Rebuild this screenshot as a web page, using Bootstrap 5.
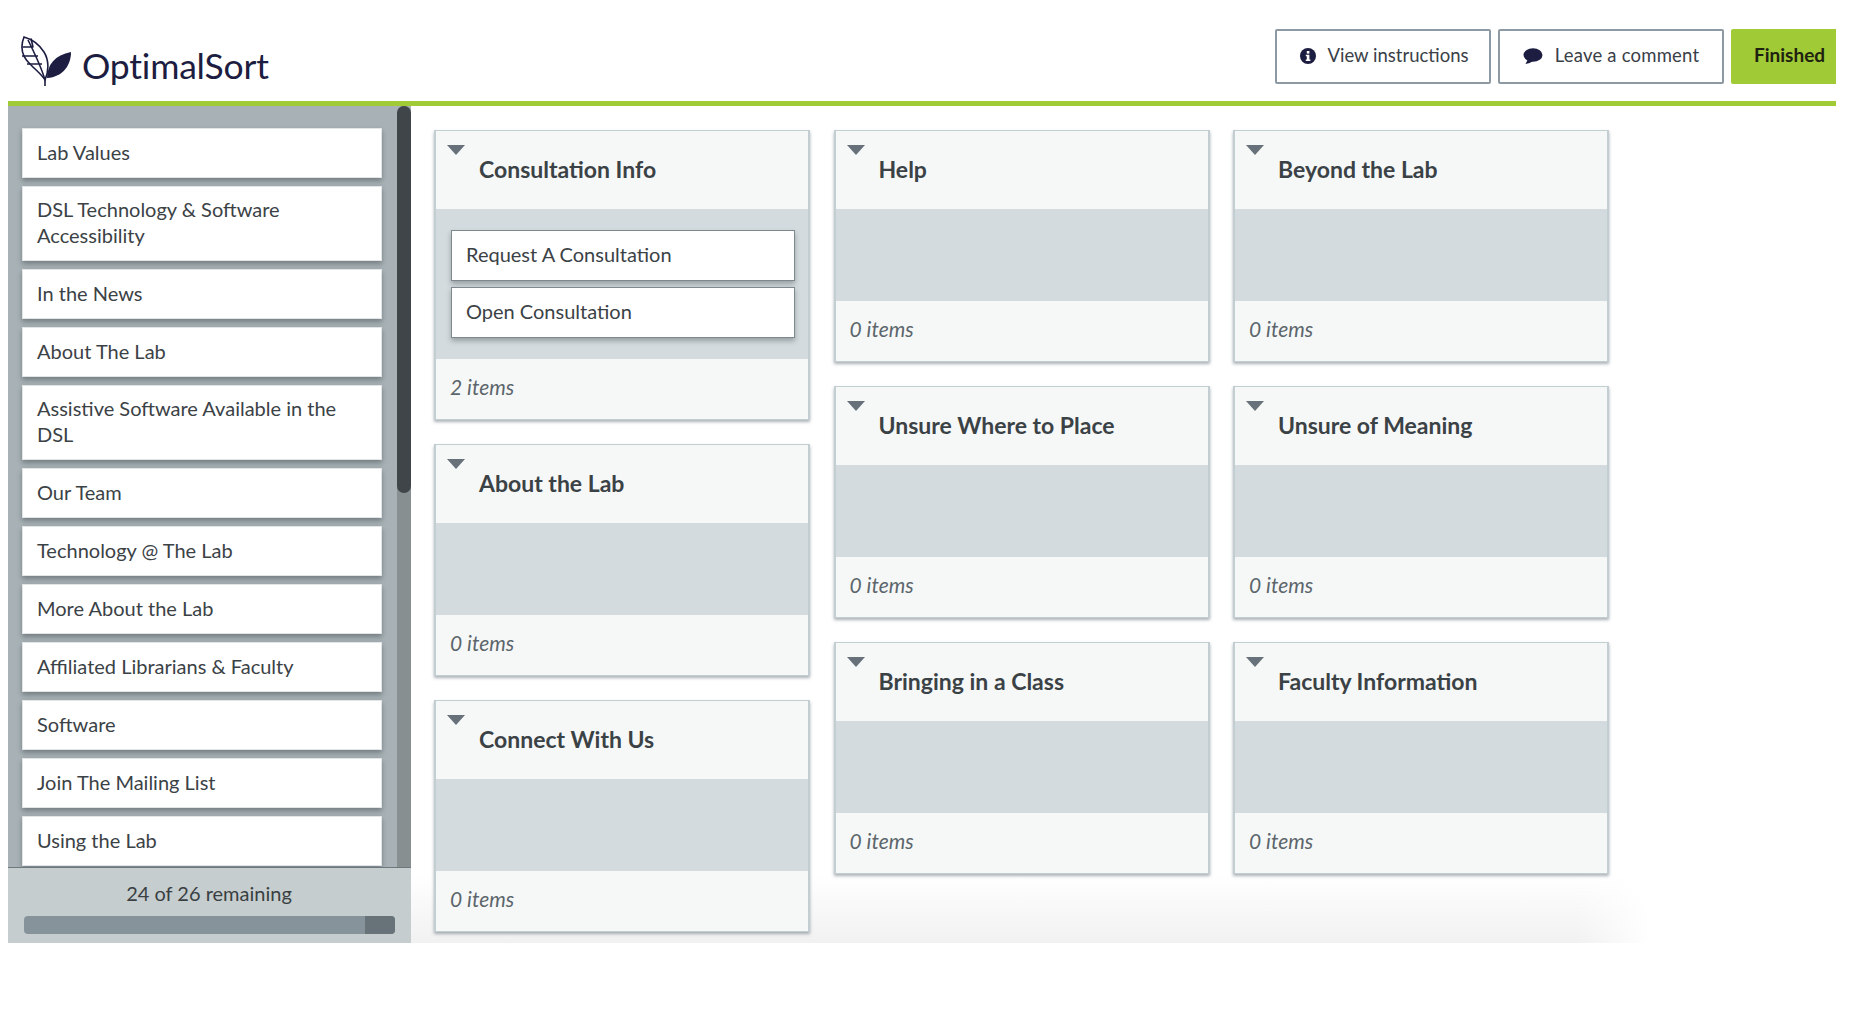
<!DOCTYPE html>
<html lang="en">
<head>
<meta charset="utf-8">
<title>OptimalSort</title>
<link href="https://cdn.jsdelivr.net/npm/bootstrap@5.3.0/dist/css/bootstrap.min.css" rel="stylesheet">
<style>
body{background:#fff;font-family:"Lato","Liberation Sans",sans-serif;color:#3b4246;margin:0}
.shell{width:1828px;margin-left:8px}
.top-bar{height:106px;border-bottom:5px solid #a0ca36;padding-top:29px}
.brand-box{width:270px;height:73px;padding-left:11px;margin-top:6px;margin-right:auto}
.brand-name{font-size:35.5px;color:#1c1d40;letter-spacing:-.2px;line-height:1;margin-left:9px;margin-top:13px}
.act-btn{height:55px;border:2px solid #8d9aa4;border-radius:2px;background:#fff;font-size:18.5px;color:#3a4048;padding:0 0 2px;margin-left:7px}
.act-view{width:216px}
.act-comment{width:226px;letter-spacing:.2px}
.act-done{width:105px;border-color:#a0ca36;background:#a0ca36;font-weight:700;font-size:19px;color:#1f2210;border-radius:2px 0 0 2px;padding-left:21px;text-align:left}
.act-view svg{margin-right:11px;margin-left:3px}
.act-comment svg{margin-right:12px}
.work{height:837px}
.side-panel{width:403px;height:837px;flex:none;background:#a8b2b6}
.side-scroll{height:761px;overflow:hidden}
.side-list{width:389px;padding:22px 0 0 14px;gap:8px}
.side-rail{width:14px;background:#878f91;border-radius:6px 6px 0 0;flex:none}
.side-thumb{height:387px;background:#3f4548;border-radius:7px}
.sort-item{background:#fff;width:360px;flex:none;padding:0 14px 3px;font-size:20px;line-height:26px;color:#3b4246;min-height:50px;box-shadow:0 3px 5px rgba(40,50,55,.4);display:flex;align-items:center;border:1px solid #e1e5e6}
.item-tall{min-height:75px}
.side-foot{height:76px;background:#c5cdcf;border-top:1px solid #6d787e;text-align:center;padding:0 17px 0 16px}
.foot-text{font-size:20px;line-height:24px;padding-top:13px;margin-bottom:11px;color:#3a3f42}
.meter{height:18px;background:#87939a;border-radius:4px;overflow:hidden;width:371px}
.meter-fill{background:#687279;height:100%}
.board{position:relative;padding:24px 0 0 23px;gap:23.500px;flex:1;overflow:hidden;height:837px}
.board::after{content:"";position:absolute;left:0;bottom:0;width:1240px;height:68px;background:linear-gradient(to bottom,rgba(242,242,242,0),#f1f1f1);-webkit-mask-image:linear-gradient(to right,#000 94%,transparent);mask-image:linear-gradient(to right,#000 94%,transparent)}
.board-col{width:376px;gap:24px;position:relative;z-index:1}
.cat-card{background:#f6f8f7;border:2px solid #c3ced2;border-top-width:1px;border-bottom-width:1px;box-shadow:0 2px 3px rgba(70,85,95,.45);width:376px}
.cat-head{height:78px;background:#f6f8f7}
.cat-caret{width:0;height:0;border-left:9px solid transparent;border-right:9px solid transparent;border-top:10px solid #66717a;margin:14px 0 0 11px}
.cat-title{font-size:23px;font-weight:700;color:#3b4246;line-height:28px;margin:24px 0 0 14px}
.cat-body{background:#d3dbde;min-height:92px;padding:21px 14px 21px 15px;gap:6px}
.cat-body .sort-item{width:344px;min-height:51px;border:1px solid #7d898f;box-shadow:0 3px 5px rgba(40,50,55,.35)}
.cat-foot{height:60px;padding-left:14px;font-size:21px;font-style:italic;color:#5c666c;line-height:56px}
</style>
</head>
<body>
<div class="shell">
  <header class="top-bar d-flex align-items-start">
    <div class="brand-box d-flex">
      <svg width="54" height="52" viewBox="0 0 54 52" fill="none" stroke="#1c1d40" stroke-width="1.6">
        <path d="M5 2C1 12 3 22 12 30C18 36 24 41 26 45C30 36 30 25 25 17C20 9 12 4 5 2Z"/>
        <path d="M9 5C15 17 22 31 26 45V51M3.500 12H14.500M3 21H19M8 29H23M12 3.500L14 12"/>
        <path fill="#1c1d40" stroke="none" d="M28 43C28 30 36 20 52 17C52 30 44 42 28 43Z"/>
      </svg>
      <span class="brand-name">OptimalSort</span>
    </div>
    <button class="btn act-btn act-view d-flex align-items-center justify-content-center">
      <svg width="16" height="16" viewBox="0 0 16 16"><circle cx="8" cy="8" r="8" fill="#1c1d40"/><rect x="6.800" y="3" width="2.600" height="2.600" fill="#fff"/><path fill="#fff" d="M5.800 6.700H9.400V11.500H10.400V13H5.800V11.500H6.800V8.200H5.800Z"/></svg>View instructions
    </button>
    <button class="btn act-btn act-comment d-flex align-items-center justify-content-center">
      <svg width="20" height="16" viewBox="0 0 20 16"><ellipse cx="10" cy="7" rx="9.500" ry="6.800" fill="#1c1d40"/><path fill="#1c1d40" d="M5 11L2.500 16C5.500 15.500 8 14.500 10 13Z"/></svg>Leave a comment
    </button>
    <button class="btn act-btn act-done">Finished</button>
  </header>
  <main class="work d-flex">
    <aside class="side-panel d-flex flex-column">
      <div class="side-scroll d-flex">
        <div class="side-list d-flex flex-column">
          <div class="sort-item">Lab Values</div>
          <div class="sort-item item-tall">DSL Technology &amp; Software Accessibility</div>
          <div class="sort-item">In the News</div>
          <div class="sort-item">About The Lab</div>
          <div class="sort-item item-tall">Assistive Software Available in the DSL</div>
          <div class="sort-item">Our Team</div>
          <div class="sort-item">Technology @ The Lab</div>
          <div class="sort-item">More About the Lab</div>
          <div class="sort-item">Affiliated Librarians &amp; Faculty</div>
          <div class="sort-item">Software</div>
          <div class="sort-item">Join The Mailing List</div>
          <div class="sort-item">Using the Lab</div>
        </div>
        <div class="side-rail"><div class="side-thumb"></div></div>
      </div>
      <div class="side-foot">
        <div class="foot-text">24 of 26 remaining</div>
        <div class="meter d-flex justify-content-end"><div class="meter-fill" style="width:8%"></div></div>
      </div>
    </aside>
    <section class="board d-flex">
      <div class="board-col d-flex flex-column">
        <div class="cat-card">
          <div class="cat-head d-flex"><span class="cat-caret"></span><span class="cat-title">Consultation Info</span></div>
          <div class="cat-body d-flex flex-column">
            <div class="sort-item">Request A Consultation</div>
            <div class="sort-item">Open Consultation</div>
          </div>
          <div class="cat-foot">2 items</div>
        </div>
        <div class="cat-card">
          <div class="cat-head d-flex"><span class="cat-caret"></span><span class="cat-title">About the Lab</span></div>
          <div class="cat-body"></div>
          <div class="cat-foot">0 items</div>
        </div>
        <div class="cat-card">
          <div class="cat-head d-flex"><span class="cat-caret"></span><span class="cat-title">Connect With Us</span></div>
          <div class="cat-body"></div>
          <div class="cat-foot">0 items</div>
        </div>
      </div>
      <div class="board-col d-flex flex-column">
        <div class="cat-card">
          <div class="cat-head d-flex"><span class="cat-caret"></span><span class="cat-title">Help</span></div>
          <div class="cat-body"></div>
          <div class="cat-foot">0 items</div>
        </div>
        <div class="cat-card">
          <div class="cat-head d-flex"><span class="cat-caret"></span><span class="cat-title">Unsure Where to Place</span></div>
          <div class="cat-body"></div>
          <div class="cat-foot">0 items</div>
        </div>
        <div class="cat-card">
          <div class="cat-head d-flex"><span class="cat-caret"></span><span class="cat-title">Bringing in a Class</span></div>
          <div class="cat-body"></div>
          <div class="cat-foot">0 items</div>
        </div>
      </div>
      <div class="board-col d-flex flex-column">
        <div class="cat-card">
          <div class="cat-head d-flex"><span class="cat-caret"></span><span class="cat-title">Beyond the Lab</span></div>
          <div class="cat-body"></div>
          <div class="cat-foot">0 items</div>
        </div>
        <div class="cat-card">
          <div class="cat-head d-flex"><span class="cat-caret"></span><span class="cat-title">Unsure of Meaning</span></div>
          <div class="cat-body"></div>
          <div class="cat-foot">0 items</div>
        </div>
        <div class="cat-card">
          <div class="cat-head d-flex"><span class="cat-caret"></span><span class="cat-title">Faculty Information</span></div>
          <div class="cat-body"></div>
          <div class="cat-foot">0 items</div>
        </div>
      </div>
    </section>
  </main>
</div>
<script src="https://cdn.jsdelivr.net/npm/bootstrap@5.3.0/dist/js/bootstrap.bundle.min.js"></script>
</body>
</html>
